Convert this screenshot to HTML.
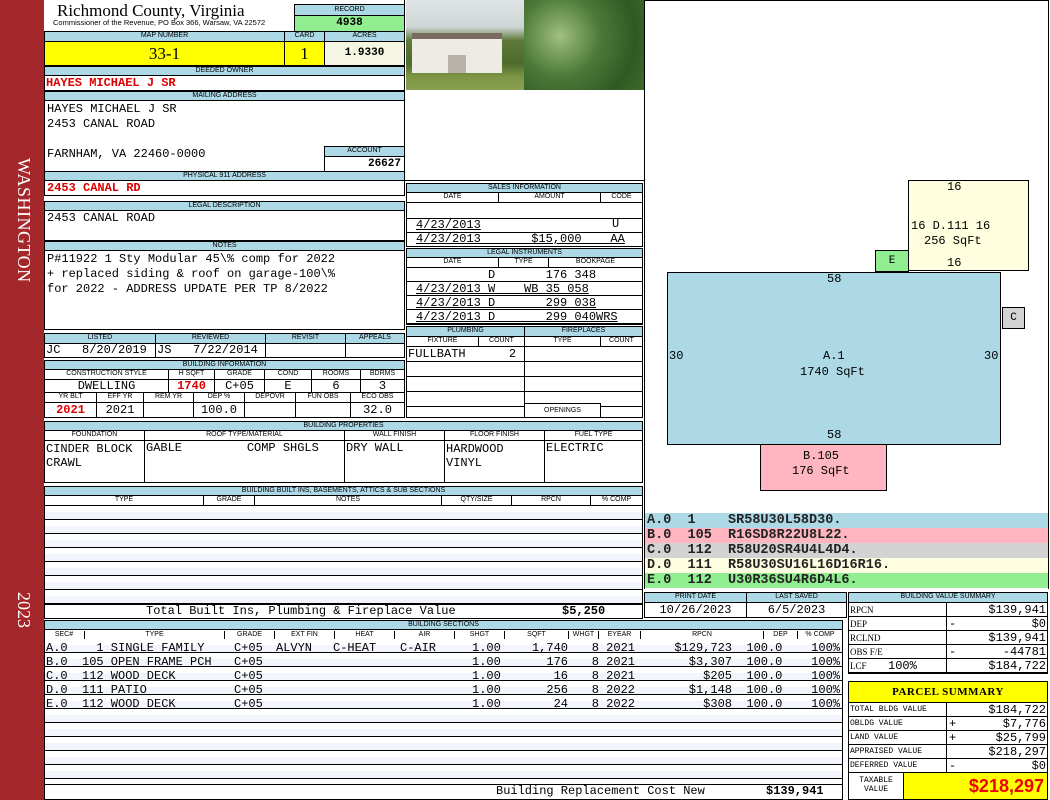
<!DOCTYPE html>
<html><head><meta charset="utf-8"><style>
*{margin:0;padding:0;box-sizing:border-box}
body{width:1050px;height:800px;position:relative;background:#fff;overflow:hidden;font-family:"Liberation Mono",monospace}
.a{position:absolute}
.b{position:absolute;border:1px solid #000}
.h{position:absolute;border:1px solid #000;background:#add8e6;font:7px/8px "Liberation Sans",sans-serif;text-align:center;color:#000;overflow:hidden;white-space:nowrap}
.m{position:absolute;font:12px/13px "Liberation Mono",monospace;white-space:pre;color:#000}
.r{color:#d00;font-weight:bold}
.cd{white-space:pre;padding-left:2px;height:15px}
.sr{position:absolute;top:641px;font:12px/14px "Liberation Mono",monospace;white-space:pre}
</style></head><body>

<!-- left red bar -->
<div class="a" style="left:0;top:0;width:44px;height:800px;background:#a4282b"></div>
<div class="a" style="left:10px;top:158px;width:24px;height:170px;writing-mode:vertical-rl;color:#fff;font:18px 'Liberation Serif',serif;letter-spacing:0.5px">WASHINGTON</div>
<div class="a" style="left:10px;top:592px;width:24px;height:40px;writing-mode:vertical-rl;color:#fff;font:18px 'Liberation Serif',serif">2023</div>

<!-- header -->
<div class="a" style="left:57px;top:1px;font:17px/20px 'Liberation Serif',serif">Richmond County, Virginia</div>
<div class="a" style="left:53px;top:19px;font:7.5px/8px 'Liberation Sans',sans-serif;white-space:nowrap">Commissioner of the Revenue, PO Box 366, Warsaw, VA 22572</div>
<div class="h" style="left:294px;top:4px;width:111px;height:12px;line-height:10px">RECORD</div>
<div class="b" style="left:294px;top:15px;width:111px;height:17px;background:#90ee90;font:bold 11px/15px 'Liberation Mono';text-align:center">4938</div>

<div class="h" style="left:44px;top:31px;width:241px;height:11px">MAP NUMBER</div>
<div class="h" style="left:284px;top:31px;width:41px;height:11px">CARD</div>
<div class="h" style="left:324px;top:31px;width:81px;height:11px">ACRES</div>
<div class="b" style="left:44px;top:41px;width:241px;height:25px;background:#ff0;font:17px/23px 'Liberation Serif',serif;text-align:center">33-1</div>
<div class="b" style="left:284px;top:41px;width:41px;height:25px;background:#ff0;font:17px/23px 'Liberation Serif',serif;text-align:center">1</div>
<div class="b" style="left:324px;top:41px;width:81px;height:25px;background:#f5f5e4;font:bold 11px/23px 'Liberation Mono';text-align:center">1.9330</div>

<div class="h" style="left:44px;top:66px;width:361px;height:10px">DEEDED OWNER</div>
<div class="b" style="left:44px;top:75px;width:361px;height:16px"></div>
<div class="m r" style="left:46px;top:77px">HAYES MICHAEL J SR</div>
<div class="h" style="left:44px;top:91px;width:361px;height:10px">MAILING ADDRESS</div>
<div class="b" style="left:44px;top:100px;width:361px;height:72px"></div>
<div class="m" style="left:47px;top:103px">HAYES MICHAEL J SR</div>
<div class="m" style="left:47px;top:118px">2453 CANAL ROAD</div>
<div class="m" style="left:47px;top:148px">FARNHAM, VA 22460-0000</div>
<div class="h" style="left:324px;top:146px;width:81px;height:11px">ACCOUNT</div>
<div class="b" style="left:324px;top:156px;width:81px;height:16px;font:bold 11px/14px 'Liberation Mono';text-align:right;padding-right:3px">26627</div>
<div class="h" style="left:44px;top:171px;width:361px;height:10px">PHYSICAL 911 ADDRESS</div>
<div class="b" style="left:44px;top:180px;width:361px;height:16px"></div>
<div class="m r" style="left:47px;top:182px">2453 CANAL RD</div>

<div class="h" style="left:44px;top:201px;width:361px;height:10px">LEGAL DESCRIPTION</div>
<div class="b" style="left:44px;top:210px;width:361px;height:31px"></div>
<div class="m" style="left:47px;top:212px">2453 CANAL ROAD</div>
<div class="h" style="left:44px;top:241px;width:361px;height:10px">NOTES</div>
<div class="b" style="left:44px;top:250px;width:361px;height:80px"></div>
<div class="m" style="left:47px;top:252px;line-height:15px">P#11922 1 Sty Modular 45\% comp for 2022
+ replaced siding &amp; roof on garage-100\%
for 2022 - ADDRESS UPDATE PER TP 8/2022</div>

<!-- listed -->
<div class="h" style="left:44px;top:333px;width:112px;height:11px">LISTED</div>
<div class="h" style="left:155px;top:333px;width:111px;height:11px">REVIEWED</div>
<div class="h" style="left:265px;top:333px;width:81px;height:11px">REVISIT</div>
<div class="h" style="left:345px;top:333px;width:60px;height:11px">APPEALS</div>
<div class="b" style="left:44px;top:343px;width:112px;height:15px"></div>
<div class="b" style="left:155px;top:343px;width:111px;height:15px"></div>
<div class="b" style="left:265px;top:343px;width:81px;height:15px"></div>
<div class="b" style="left:345px;top:343px;width:60px;height:15px"></div>
<div class="m" style="left:46px;top:344px">JC   8/20/2019</div>
<div class="m" style="left:157px;top:344px">JS   7/22/2014</div>

<!-- building info -->
<div class="h" style="left:44px;top:360px;width:361px;height:10px">BUILDING INFORMATION</div>
<div class="h" style="left:44px;top:369px;width:125px;height:11px;background:#fff">CONSTRUCTION STYLE</div>
<div class="h" style="left:168px;top:369px;width:47px;height:11px;background:#fff">H SQFT</div>
<div class="h" style="left:214px;top:369px;width:51px;height:11px;background:#fff">GRADE</div>
<div class="h" style="left:264px;top:369px;width:48px;height:11px;background:#fff">COND</div>
<div class="h" style="left:311px;top:369px;width:50px;height:11px;background:#fff">ROOMS</div>
<div class="h" style="left:360px;top:369px;width:45px;height:11px;background:#fff">BDRMS</div>
<div class="b" style="left:44px;top:379px;width:125px;height:14px;font:12px/12px 'Liberation Mono';text-align:center">DWELLING</div>
<div class="b r" style="left:168px;top:379px;width:47px;height:14px;font:bold 12px/12px 'Liberation Mono';text-align:center">1740</div>
<div class="b" style="left:214px;top:379px;width:51px;height:14px;font:12px/12px 'Liberation Mono';text-align:center">C+05</div>
<div class="b" style="left:264px;top:379px;width:48px;height:14px;font:12px/12px 'Liberation Mono';text-align:center">E</div>
<div class="b" style="left:311px;top:379px;width:50px;height:14px;font:12px/12px 'Liberation Mono';text-align:center">6</div>
<div class="b" style="left:360px;top:379px;width:45px;height:14px;font:12px/12px 'Liberation Mono';text-align:center">3</div>
<div class="h" style="left:44px;top:392px;width:53px;height:11px;background:#fff">YR BLT</div>
<div class="h" style="left:96px;top:392px;width:48px;height:11px;background:#fff">EFF YR</div>
<div class="h" style="left:143px;top:392px;width:51px;height:11px;background:#fff">REM YR</div>
<div class="h" style="left:193px;top:392px;width:52px;height:11px;background:#fff">DEP %</div>
<div class="h" style="left:244px;top:392px;width:52px;height:11px;background:#fff">DEPOVR</div>
<div class="h" style="left:295px;top:392px;width:56px;height:11px;background:#fff">FUN OBS</div>
<div class="h" style="left:350px;top:392px;width:55px;height:11px;background:#fff">ECO OBS</div>
<div class="b r" style="left:44px;top:402px;width:53px;height:16px;font:bold 12px/14px 'Liberation Mono';text-align:center">2021</div>
<div class="b" style="left:96px;top:402px;width:48px;height:16px;font:12px/14px 'Liberation Mono';text-align:center">2021</div>
<div class="b" style="left:143px;top:402px;width:51px;height:16px"></div>
<div class="b" style="left:193px;top:402px;width:52px;height:16px;font:12px/14px 'Liberation Mono';text-align:center">100.0</div>
<div class="b" style="left:244px;top:402px;width:52px;height:16px"></div>
<div class="b" style="left:295px;top:402px;width:56px;height:16px"></div>
<div class="b" style="left:350px;top:402px;width:55px;height:16px;font:12px/14px 'Liberation Mono';text-align:center">32.0</div>

<!-- building properties -->
<div class="h" style="left:44px;top:421px;width:599px;height:10px">BUILDING PROPERTIES</div>
<div class="h" style="left:44px;top:430px;width:101px;height:11px;background:#fff">FOUNDATION</div>
<div class="h" style="left:144px;top:430px;width:201px;height:11px;background:#fff">ROOF TYPE/MATERIAL</div>
<div class="h" style="left:344px;top:430px;width:101px;height:11px;background:#fff">WALL FINISH</div>
<div class="h" style="left:444px;top:430px;width:101px;height:11px;background:#fff">FLOOR FINISH</div>
<div class="h" style="left:544px;top:430px;width:99px;height:11px;background:#fff">FUEL TYPE</div>
<div class="b" style="left:44px;top:440px;width:101px;height:43px"></div>
<div class="b" style="left:144px;top:440px;width:201px;height:43px"></div>
<div class="b" style="left:344px;top:440px;width:101px;height:43px"></div>
<div class="b" style="left:444px;top:440px;width:101px;height:43px"></div>
<div class="b" style="left:544px;top:440px;width:99px;height:43px"></div>
<div class="m" style="left:46px;top:442px;line-height:14px">CINDER BLOCK
CRAWL</div>
<div class="m" style="left:146px;top:442px">GABLE         COMP SHGLS</div>
<div class="m" style="left:346px;top:442px">DRY WALL</div>
<div class="m" style="left:446px;top:442px;line-height:14px">HARDWOOD
VINYL</div>
<div class="m" style="left:546px;top:442px">ELECTRIC</div>

<!-- built ins -->
<div class="h" style="left:44px;top:486px;width:599px;height:10px">BUILDING BUILT INS, BASEMENTS, ATTICS &amp; SUB SECTIONS</div>
<div class="h" style="left:44px;top:495px;width:160px;height:11px;background:#fff">TYPE</div>
<div class="h" style="left:203px;top:495px;width:52px;height:11px;background:#fff">GRADE</div>
<div class="h" style="left:254px;top:495px;width:188px;height:11px;background:#fff">NOTES</div>
<div class="h" style="left:441px;top:495px;width:71px;height:11px;background:#fff">QTY/SIZE</div>
<div class="h" style="left:511px;top:495px;width:80px;height:11px;background:#fff">RPCN</div>
<div class="h" style="left:590px;top:495px;width:53px;height:11px;background:#fff">% COMP</div>
<div class="b" style="left:44px;top:505px;width:599px;height:100px;background:repeating-linear-gradient(#fff 0 6px,#f2f5fb 6px 13px,#000 13px 14px)"></div>
<div class="b" style="left:44px;top:604px;width:599px;height:15px"></div>
<div class="m" style="left:146px;top:605px">Total Built Ins, Plumbing &amp; Fireplace Value</div>
<div class="m" style="left:562px;top:605px;font-weight:bold">$5,250</div>

<!-- building sections -->
<div class="h" style="left:44px;top:620px;width:799px;height:10px">BUILDING SECTIONS</div>
<div class="b" style="left:44px;top:629px;width:799px;height:11px;background:#fff"></div>
<div class="a" style="top:631px;left:44px;width:799px;height:9px;font:7px/8px 'Liberation Sans'">
<span class="a" style="left:0;width:40px;text-align:center">SEC#</span>
<span class="a" style="left:40px;width:140px;text-align:center;border-left:1px solid #000">TYPE</span>
<span class="a" style="left:180px;width:50px;text-align:center;border-left:1px solid #000">GRADE</span>
<span class="a" style="left:230px;width:60px;text-align:center;border-left:1px solid #000">EXT FIN</span>
<span class="a" style="left:290px;width:60px;text-align:center;border-left:1px solid #000">HEAT</span>
<span class="a" style="left:350px;width:60px;text-align:center;border-left:1px solid #000">AIR</span>
<span class="a" style="left:410px;width:50px;text-align:center;border-left:1px solid #000">SHGT</span>
<span class="a" style="left:460px;width:64px;text-align:center;border-left:1px solid #000">SQFT</span>
<span class="a" style="left:524px;width:30px;text-align:center;border-left:1px solid #000">WHGT</span>
<span class="a" style="left:554px;width:42px;text-align:center;border-left:1px solid #000">EYEAR</span>
<span class="a" style="left:596px;width:123px;text-align:center;border-left:1px solid #000">RPCN</span>
<span class="a" style="left:719px;width:34px;text-align:center;border-left:1px solid #000">DEP</span>
<span class="a" style="left:753px;width:45px;text-align:center;border-left:1px solid #000">% COMP</span>
</div>
<div class="b" style="left:44px;top:639px;width:799px;height:146px;background:repeating-linear-gradient(#fff 0 6px,#f2f5fb 6px 13px,#000 13px 14px);border-top:none"></div>
<div class="sr" style="left:46px">A.0
B.0
C.0
D.0
E.0</div>
<div class="sr" style="left:82px">  1 SINGLE FAMILY
105 OPEN FRAME PCH
112 WOOD DECK
111 PATIO
112 WOOD DECK</div>
<div class="sr" style="left:234px">C+05
C+05
C+05
C+05
C+05</div>
<div class="sr" style="left:276px">ALVYN</div>
<div class="sr" style="left:333px">C-HEAT</div>
<div class="sr" style="left:400px">C-AIR</div>
<div class="sr" style="left:472px">1.00
1.00
1.00
1.00
1.00</div>
<div class="sr" style="left:500px;width:68px;text-align:right">1,740
176
16
256
24</div>
<div class="sr" style="left:570px;width:65px;text-align:right">8 2021
8 2021
8 2021
8 2022
8 2022</div>
<div class="sr" style="left:640px;width:200px;text-align:right">$129,723  100.0    100%
  $3,307  100.0    100%
    $205  100.0    100%
  $1,148  100.0    100%
    $308  100.0    100%</div>
<div class="b" style="left:44px;top:784px;width:799px;height:16px"></div>
<div class="m" style="left:496px;top:785px">Building Replacement Cost New</div>
<div class="m" style="left:766px;top:785px;font-weight:bold">$139,941</div>

<!-- photos -->
<div class="a" style="left:406px;top:0;width:118px;height:90px;background:linear-gradient(#dfe4e6 0,#cfd6d6 30%,#5f7a3a 45%,#4d6b2c 70%,#7c9444 85%,#8aa050 100%)"></div>
<div class="a" style="left:412px;top:33px;width:90px;height:40px;background:#eeeae4;border-top:6px solid #7a6a60"></div>
<div class="a" style="left:448px;top:55px;width:18px;height:18px;background:#b9b2a8"></div>
<div class="a" style="left:524px;top:0;width:120px;height:90px;background:radial-gradient(circle at 30% 40%,#9fbf80,#4d7a38 40%,#2f5a25 75%,#3f6a2a)"></div>
<div class="b" style="left:404px;top:0;width:241px;height:181px;border-top:none"></div>

<!-- sales -->
<div class="h" style="left:406px;top:183px;width:237px;height:10px">SALES INFORMATION</div>
<div class="h" style="left:406px;top:192px;width:93px;height:11px;background:#fff">DATE</div>
<div class="h" style="left:498px;top:192px;width:103px;height:11px;background:#fff">AMOUNT</div>
<div class="h" style="left:600px;top:192px;width:43px;height:11px;background:#fff">CODE</div>
<div class="b" style="left:406px;top:202px;width:237px;height:45px;background:linear-gradient(#fff 0 15px,#000 15px 16px,#fff 16px 29px,#000 29px 30px,#fff 30px)"></div>
<div class="m" style="left:416px;top:218px;line-height:14px;text-decoration:underline">4/23/2013
4/23/2013       $15,000    AA</div>
<div class="m" style="left:612px;top:218px">U</div>
<div class="h" style="left:406px;top:248px;width:237px;height:10px">LEGAL INSTRUMENTS</div>
<div class="h" style="left:406px;top:257px;width:93px;height:11px;background:#fff">DATE</div>
<div class="h" style="left:498px;top:257px;width:51px;height:11px;background:#fff">TYPE</div>
<div class="h" style="left:548px;top:257px;width:95px;height:11px;background:#fff">BOOKPAGE</div>
<div class="b" style="left:406px;top:267px;width:237px;height:58px;background:repeating-linear-gradient(#fff 0 13px,#000 13px 14px)"></div>
<div class="m" style="left:416px;top:268px;line-height:14px">          D       176 348</div>
<div class="m" style="left:416px;top:282px;line-height:14px;text-decoration:underline">4/23/2013 W    WB 35 058
4/23/2013 D       299 038
4/23/2013 D       299 040WRS</div>

<!-- plumbing -->
<div class="h" style="left:406px;top:326px;width:119px;height:11px">PLUMBING</div>
<div class="h" style="left:524px;top:326px;width:119px;height:11px">FIREPLACES</div>
<div class="h" style="left:406px;top:336px;width:73px;height:11px;background:#fff">FIXTURE</div>
<div class="h" style="left:478px;top:336px;width:47px;height:11px;background:#fff">COUNT</div>
<div class="h" style="left:524px;top:336px;width:77px;height:11px;background:#fff">TYPE</div>
<div class="h" style="left:600px;top:336px;width:43px;height:11px;background:#fff">COUNT</div>
<div class="b" style="left:406px;top:346px;width:119px;height:72px;background:repeating-linear-gradient(#fff 0 14px,#000 14px 15px)"></div>
<div class="b" style="left:524px;top:346px;width:119px;height:72px;background:repeating-linear-gradient(#fff 0 14px,#000 14px 15px)"></div>
<div class="m" style="left:408px;top:348px">FULLBATH      2</div>
<div class="a" style="left:524px;top:403px;width:77px;height:15px;border:1px solid #000;background:#fff;font:7px/13px 'Liberation Sans';text-align:center">OPENINGS</div>

<!-- sketch -->
<div class="b" style="left:644px;top:0;width:405px;height:514px"></div>
<div class="b" style="left:667px;top:272px;width:334px;height:173px;background:#add8e6"></div>
<div class="b" style="left:760px;top:444px;width:127px;height:47px;background:#ffb6c1"></div>
<div class="b" style="left:1002px;top:307px;width:23px;height:22px;background:#d3d3d3;font:11px/20px 'Liberation Mono';text-align:center">C</div>
<div class="b" style="left:908px;top:180px;width:121px;height:91px;background:#ffffe0"></div>
<div class="b" style="left:875px;top:250px;width:34px;height:22px;background:#90ee90;font:11px/20px 'Liberation Mono';text-align:center">E</div>
<div class="m" style="left:827px;top:273px">58</div>
<div class="m" style="left:669px;top:350px">30</div>
<div class="m" style="left:984px;top:350px">30</div>
<div class="m" style="left:823px;top:350px">A.1</div>
<div class="m" style="left:800px;top:366px">1740 SqFt</div>
<div class="m" style="left:827px;top:429px">58</div>
<div class="m" style="left:803px;top:450px">B.105</div>
<div class="m" style="left:792px;top:465px">176 SqFt</div>
<div class="m" style="left:947px;top:181px">16</div>
<div class="m" style="left:911px;top:220px">16 D.111 16</div>
<div class="m" style="left:924px;top:235px">256 SqFt</div>
<div class="m" style="left:947px;top:257px">16</div>

<!-- codes -->
<div class="a" style="left:644px;top:513px;width:405px;height:76px;border-left:1px solid #000;border-right:1px solid #000;font:bold 13.5px/15px 'Liberation Mono';color:#222"><div class="cd" style="background:#add8e6">A.0  1    SR58U30L58D30.</div><div class="cd" style="background:#ffb6c1">B.0  105  R16SD8R22U8L22.</div><div class="cd" style="background:#d3d3d3">C.0  112  R58U20SR4U4L4D4.</div><div class="cd" style="background:#fffde0">D.0  111  R58U30SU16L16D16R16.</div><div class="cd" style="background:#90ee90">E.0  112  U30R36SU4R6D4L6.</div></div>

<!-- print date -->
<div class="h" style="left:644px;top:592px;width:103px;height:11px">PRINT DATE</div>
<div class="h" style="left:746px;top:592px;width:101px;height:11px">LAST SAVED</div>
<div class="b" style="left:644px;top:602px;width:103px;height:16px;font:12px/14px 'Liberation Mono';text-align:center">10/26/2023</div>
<div class="b" style="left:746px;top:602px;width:101px;height:16px;font:12px/14px 'Liberation Mono';text-align:center">6/5/2023</div>

<!-- value summary -->
<div class="h" style="left:848px;top:592px;width:200px;height:11px">BUILDING VALUE SUMMARY</div>
<div class="a" style="left:848px;top:602px;width:200px;height:72px">
<div class="b" style="left:0;top:0;width:99px;height:72px;background:repeating-linear-gradient(#fff 0 13px,#000 13px 14px)"></div>
<div class="b" style="left:98px;top:0;width:102px;height:72px;background:repeating-linear-gradient(#fff 0 13px,#000 13px 14px)"></div>
<div class="m" style="left:2px;top:1px;font-size:9px;line-height:14px;font-family:'Liberation Serif'">RPCN
DEP
RCLND
OBS F/E
LCF</div>
<div class="m" style="left:40px;top:57px;line-height:14px">100%</div>
<div class="m" style="left:101px;top:15px;line-height:14px">-</div>
<div class="m" style="left:101px;top:43px;line-height:14px">-</div>
<div class="m" style="left:98px;top:1px;width:100px;text-align:right;line-height:14px">$139,941
$0
$139,941
-44781
$184,722</div>
</div>

<!-- parcel summary -->
<div class="b" style="left:848px;top:681px;width:200px;height:22px;background:#ff0;font:bold 11px/20px 'Liberation Serif',serif;text-align:center;letter-spacing:0.5px">PARCEL SUMMARY</div>
<div class="a" style="left:848px;top:702px;width:200px;height:71px">
<div class="b" style="left:0;top:0;width:99px;height:71px;background:repeating-linear-gradient(#fff 0 13px,#000 13px 14px)"></div>
<div class="b" style="left:98px;top:0;width:102px;height:71px;background:repeating-linear-gradient(#fff 0 13px,#000 13px 14px)"></div>
<div class="m" style="left:2px;top:1px;font-size:8px;line-height:14px">TOTAL BLDG VALUE
OBLDG VALUE
LAND VALUE
APPRAISED VALUE
DEFERRED VALUE</div>
<div class="m" style="left:101px;top:15px;line-height:14px">+</div>
<div class="m" style="left:101px;top:29px;line-height:14px">+</div>
<div class="m" style="left:101px;top:57px;line-height:14px">-</div>
<div class="m" style="left:98px;top:1px;width:100px;text-align:right;line-height:14px">$184,722
$7,776
$25,799
$218,297
$0</div>
</div>
<div class="b" style="left:848px;top:772px;width:56px;height:28px;font:8px/9px 'Liberation Mono';text-align:center;padding-top:3px">TAXABLE<br>VALUE</div>
<div class="b" style="left:903px;top:772px;width:145px;height:28px;background:#ff0;color:#e00;font:bold 18px/26px 'Liberation Sans',sans-serif;text-align:right;padding-right:3px">$218,297</div>

</body></html>
